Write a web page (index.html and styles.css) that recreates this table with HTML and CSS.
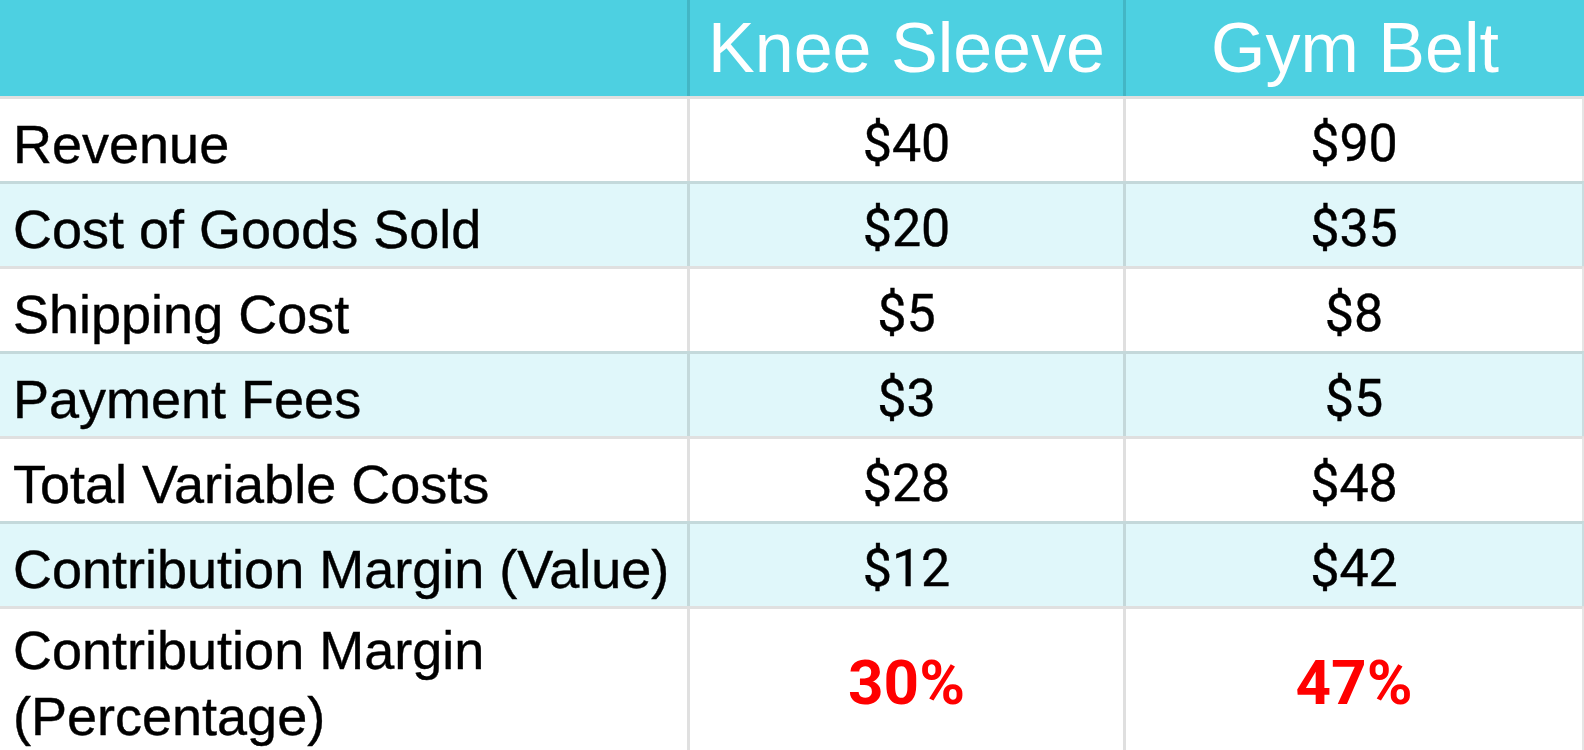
FILE: index.html
```html
<!DOCTYPE html>
<html lang="en">
<head>
<meta charset="utf-8">
<title>Contribution Margin</title>
<link rel="stylesheet" href="styles.css">
</head>
<body>
<table class="cm-table">
  <colgroup>
    <col class="col-label">
    <col class="col-a">
    <col class="col-b">
  </colgroup>
  <thead>
    <tr class="head-row">
      <th class="label"></th>
      <th class="prod">Knee Sleeve</th>
      <th class="prod">Gym Belt</th>
    </tr>
  </thead>
  <tbody>
    <tr class="row">
      <td class="label">Revenue</td>
      <td class="val">$40</td>
      <td class="val">$90</td>
    </tr>
    <tr class="row alt">
      <td class="label">Cost of Goods Sold</td>
      <td class="val">$20</td>
      <td class="val">$35</td>
    </tr>
    <tr class="row">
      <td class="label">Shipping Cost</td>
      <td class="val">$5</td>
      <td class="val">$8</td>
    </tr>
    <tr class="row alt">
      <td class="label">Payment Fees</td>
      <td class="val">$3</td>
      <td class="val">$5</td>
    </tr>
    <tr class="row">
      <td class="label">Total Variable Costs</td>
      <td class="val">$28</td>
      <td class="val">$48</td>
    </tr>
    <tr class="row alt">
      <td class="label">Contribution Margin (Value)</td>
      <td class="val">$12</td>
      <td class="val">$42</td>
    </tr>
    <tr class="row last">
      <td class="label">Contribution Margin<br>(Percentage)</td>
      <td class="val pct">30%</td>
      <td class="val pct">47%</td>
    </tr>
  </tbody>
</table>
</body>
</html>
```

FILE: styles.css
```css
html, body {
  margin: 0;
  padding: 0;
  background: #ffffff;
}

body {
  width: 1584px;
  height: 750px;
  overflow: hidden;
}

.cm-table {
  width: 1584px;
  border-collapse: separate;
  border-spacing: 0;
  table-layout: fixed;
  color: #000;
}

.col-label { width: 687px; }
.col-a { width: 436px; }
.col-b { width: 461px; }

.cm-table th,
.cm-table td {
  padding: 0;
  box-sizing: border-box;
  vertical-align: middle;
}

.cm-table th + th,
.cm-table td + td {
  border-left: 3px solid rgba(0, 0, 0, 0.12);
}

.head-row th {
  background: #4dd0e1;
  height: 96px;
  color: #ffffff;
  font-family: "Liberation Sans", Arial, sans-serif;
  font-weight: normal;
  font-size: 70px;
  line-height: 80px;
  text-align: center;
}

.row td {
  height: 85px;
  border-top: 3px solid rgba(0, 0, 0, 0.12);
  background: #ffffff;
}

.row.alt td {
  background: #e0f7fa;
}

.row td:last-child {
  border-right: 2px solid rgba(0, 0, 0, 0.10);
}

.row.last td {
  height: 144px;
}

.label {
  font-family: "Liberation Sans", Arial, sans-serif;
  font-size: 54px;
  line-height: 66px;
  text-align: left;
  padding-left: 13px !important;
  padding-top: 7px !important;
  -webkit-text-stroke: 0.4px #000;
  white-space: nowrap;
}

.val {
  font-family: Roboto, "Liberation Sans", sans-serif;
  font-size: 52px;
  line-height: 62px;
  text-align: center;
  padding-top: 7px !important;
  -webkit-text-stroke: 0.4px #000;
}

.val.pct {
  color: #ff0000;
  -webkit-text-stroke: 0;
  font-weight: bold;
  font-size: 62px;
  line-height: 72px;
}
```
